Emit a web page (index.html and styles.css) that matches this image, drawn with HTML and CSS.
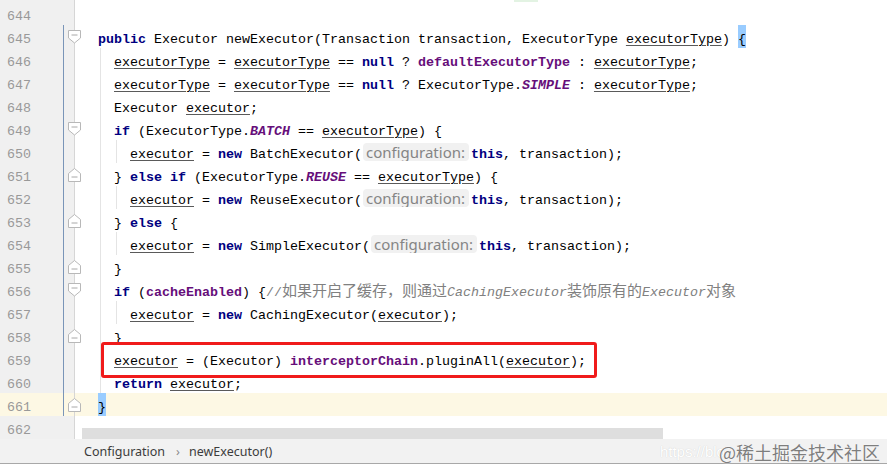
FILE: index.html
```html
<!DOCTYPE html>
<html>
<head>
<meta charset="utf-8">
<link rel="stylesheet" href="styles.css">
</head>
<body>
<div class="editor">
  <div class="topstrip"><span class="greenmark"></span></div>

  <div class="row"><div class="gutter"><span class="num">644</span><span class="sp"></span><span class="bl"></span><span class="sp2"></span><span class="fold"></span></div><div class="code"></div></div>

  <div class="row"><div class="gutter"><span class="num">645</span><span class="sp"></span><span class="bl on"></span><span class="sp2"></span><span class="fold"><svg class="fm" width="14" height="14" viewBox="0 0 14 14"><path d="M0.5 0.5H12.5V8L6.5 13L0.5 8Z"/><path class="minus" d="M3.5 5H9.5"/></svg></span></div><div class="code">  <b class="kw">public</b> Executor newExecutor(Transaction transaction, ExecutorType <u>executorType</u>) <span class="brace">{</span></div></div>

  <div class="row"><div class="gutter"><span class="num">646</span><span class="sp"></span><span class="bl on"></span><span class="sp2"></span><span class="fold"></span></div><div class="code g1">    <u>executorType</u> = <u>executorType</u> == <b class="kw">null</b> ? <b class="fld">defaultExecutorType</b> : <u>executorType</u>;</div></div>

  <div class="row"><div class="gutter"><span class="num">647</span><span class="sp"></span><span class="bl on"></span><span class="sp2"></span><span class="fold"></span></div><div class="code g1">    <u>executorType</u> = <u>executorType</u> == <b class="kw">null</b> ? ExecutorType.<b class="sf">SIMPLE</b> : <u>executorType</u>;</div></div>

  <div class="row"><div class="gutter"><span class="num">648</span><span class="sp"></span><span class="bl on"></span><span class="sp2"></span><span class="fold"></span></div><div class="code g1">    Executor <u>executor</u>;</div></div>

  <div class="row"><div class="gutter"><span class="num">649</span><span class="sp"></span><span class="bl on"></span><span class="sp2"></span><span class="fold"><svg class="fm" width="14" height="14" viewBox="0 0 14 14"><path d="M0.5 0.5H12.5V8L6.5 13L0.5 8Z"/><path class="minus" d="M3.5 5H9.5"/></svg></span></div><div class="code g1">    <b class="kw">if</b> (ExecutorType.<b class="sf">BATCH</b> == <u>executorType</u>) {</div></div>

  <div class="row"><div class="gutter"><span class="num">650</span><span class="sp"></span><span class="bl on"></span><span class="sp2"></span><span class="fold"></span></div><div class="code g2">      <u>executor</u> = <b class="kw">new</b> BatchExecutor(<span class="hint">configuration:</span><b class="kw">this</b>, transaction);</div></div>

  <div class="row"><div class="gutter"><span class="num">651</span><span class="sp"></span><span class="bl on"></span><span class="sp2"></span><span class="fold"><svg class="fm" width="14" height="14" viewBox="0 0 14 14"><path d="M6.5 0.5L12.5 5.5V13.5H0.5V5.5Z"/><path class="minus" d="M3.5 9H9.5"/></svg></span></div><div class="code g1">    } <b class="kw">else if</b> (ExecutorType.<b class="sf">REUSE</b> == <u>executorType</u>) {</div></div>

  <div class="row"><div class="gutter"><span class="num">652</span><span class="sp"></span><span class="bl on"></span><span class="sp2"></span><span class="fold"></span></div><div class="code g2">      <u>executor</u> = <b class="kw">new</b> ReuseExecutor(<span class="hint">configuration:</span><b class="kw">this</b>, transaction);</div></div>

  <div class="row"><div class="gutter"><span class="num">653</span><span class="sp"></span><span class="bl on"></span><span class="sp2"></span><span class="fold"><svg class="fm" width="14" height="14" viewBox="0 0 14 14"><path d="M6.5 0.5L12.5 5.5V13.5H0.5V5.5Z"/><path class="minus" d="M3.5 9H9.5"/></svg></span></div><div class="code g1">    } <b class="kw">else</b> {</div></div>

  <div class="row"><div class="gutter"><span class="num">654</span><span class="sp"></span><span class="bl on"></span><span class="sp2"></span><span class="fold"></span></div><div class="code g2">      <u>executor</u> = <b class="kw">new</b> SimpleExecutor(<span class="hint">configuration:</span><b class="kw">this</b>, transaction);</div></div>

  <div class="row"><div class="gutter"><span class="num">655</span><span class="sp"></span><span class="bl on"></span><span class="sp2"></span><span class="fold"><svg class="fm" width="14" height="14" viewBox="0 0 14 14"><path d="M6.5 0.5L12.5 5.5V13.5H0.5V5.5Z"/><path class="minus" d="M3.5 9H9.5"/></svg></span></div><div class="code g1">    }</div></div>

  <div class="row"><div class="gutter"><span class="num">656</span><span class="sp"></span><span class="bl on"></span><span class="sp2"></span><span class="fold"><svg class="fm" width="14" height="14" viewBox="0 0 14 14"><path d="M0.5 0.5H12.5V8L6.5 13L0.5 8Z"/><path class="minus" d="M3.5 5H9.5"/></svg></span></div><div class="code g1">    <b class="kw">if</b> (<b class="fld">cacheEnabled</b>) {<span class="cm">//<span class="cjk">如果开启了缓存，则通过</span><i>CachingExecutor</i><span class="cjk">装饰原有的</span><i>Executor</i><span class="cjk">对象</span></span></div></div>

  <div class="row"><div class="gutter"><span class="num">657</span><span class="sp"></span><span class="bl on"></span><span class="sp2"></span><span class="fold"></span></div><div class="code g2">      <u>executor</u> = <b class="kw">new</b> CachingExecutor(<u>executor</u>);</div></div>

  <div class="row"><div class="gutter"><span class="num">658</span><span class="sp"></span><span class="bl on"></span><span class="sp2"></span><span class="fold"><svg class="fm" width="14" height="14" viewBox="0 0 14 14"><path d="M6.5 0.5L12.5 5.5V13.5H0.5V5.5Z"/><path class="minus" d="M3.5 9H9.5"/></svg></span></div><div class="code g1">    }</div></div>

  <div class="row"><div class="gutter"><span class="num">659</span><span class="sp"></span><span class="bl on"></span><span class="sp2"></span><span class="fold"></span></div><div class="code g1">    <u>executor</u> = (Executor) <b class="fld">interceptorChain</b>.pluginAll(<u>executor</u>);</div></div>

  <div class="row"><div class="gutter"><span class="num">660</span><span class="sp"></span><span class="bl on"></span><span class="sp2"></span><span class="fold"></span></div><div class="code g1">    <b class="kw">return</b> <u>executor</u>;</div></div>

  <div class="row caret"><div class="gutter"><span class="num">661</span><span class="sp"></span><span class="bl on"></span><span class="sp2"></span><span class="fold"><svg class="fm" width="14" height="14" viewBox="0 0 14 14"><path d="M6.5 0.5L12.5 5.5V13.5H0.5V5.5Z"/><path class="minus" d="M3.5 9H9.5"/></svg></span></div><div class="code">  <span class="brace">}</span></div></div>

  <div class="row"><div class="gutter"><span class="num">662</span><span class="sp"></span><span class="bl"></span><span class="sp2"></span><span class="fold"></span></div><div class="code"></div></div>

  <div class="redbox"></div>
  <div class="hscroll"></div>
</div>
<div class="crumbs">
  <span class="crumb">Configuration</span><span class="arrow">›</span><span class="crumb">newExecutor()</span>
</div>
<div class="watermark"><span class="wm-url">https://blo</span><span class="wm-name">@稀土掘金技术社区</span></div>
</body>
</html>
```
FILE: styles.css
```css
html, body {
  margin: 0;
  padding: 0;
  background: #ffffff;
  width: 887px;
  height: 468px;
  overflow: hidden;
  position: relative;
}

.editor {
  position: relative;
  height: 439px;
  overflow: hidden;
  background: #ffffff;
}

.topstrip {
  height: 2px;
  display: flex;
  background: linear-gradient(to right, #f0f0f0 0, #f0f0f0 74px, #d6d6d6 74px, #d6d6d6 75px, #ffffff 75px);
}
.greenmark {
  margin-left: 514px;
  width: 24px;
  height: 2px;
  background: #e3f3e3;
}

.row {
  display: flex;
  height: 23px;
  overflow: hidden;
  font-family: "Liberation Mono", monospace;
  font-size: 13.333px;
  line-height: 17px;
  color: #000000;
}

.gutter {
  display: flex;
  width: 82px;
  flex: none;
  height: 23px;
  background: linear-gradient(to right, #f0f0f0 0, #f0f0f0 74px, #ffffff 74px);
}
.num {
  width: 31px;
  box-sizing: border-box;
  padding-top: 6px;
  text-align: right;
  color: #999999;
}
.sp { width: 32px; }
.bl { width: 1px; }
.bl.on { background: #7a95b8; }
.sp2 { width: 4px; }
.fold {
  width: 14px;
  display: flex;
  align-items: center;
  background: linear-gradient(to right, transparent 0, transparent 6px, #d6d6d6 6px, #d6d6d6 7px, transparent 7px);
}
.fm path {
  fill: #ffffff;
  stroke: #b8b8b8;
  stroke-width: 1;
}
.fm path.minus {
  fill: none;
  stroke: #a8a8a8;
}

.row.caret,
.row.caret .gutter {
  background: #fdf8e4;
}
.row.caret .fold {
  background: linear-gradient(to right, transparent 0, transparent 6px, #d6d6d6 6px, #d6d6d6 7px, transparent 7px);
}

.code {
  flex: 1;
  white-space: pre;
  height: 23px;
  box-sizing: border-box;
  padding-top: 6px;
}
.code.g1 {
  background: linear-gradient(to right, transparent 0, transparent 18px, #e4e4e4 18px, #e4e4e4 19px, transparent 19px);
}
.code.g2 {
  background:
    linear-gradient(to right, transparent 0, transparent 18px, #e4e4e4 18px, #e4e4e4 19px, transparent 19px),
    linear-gradient(to right, transparent 0, transparent 34px, #e4e4e4 34px, #e4e4e4 35px, transparent 35px);
}

.kw {
  color: #000080;
  font-weight: bold;
}
.fld {
  color: #660e7a;
  font-weight: bold;
}
.sf {
  color: #660e7a;
  font-weight: bold;
  font-style: italic;
}
u {
  text-decoration: underline;
  text-decoration-color: #5a5a5a;
  text-underline-offset: 2px;
}
.brace {
  display: inline-block;
  box-sizing: border-box;
  vertical-align: top;
  background: #99ccff;
  height: 23px;
  margin-top: -6px;
  padding-top: 6px;
}
.cm {
  color: #808080;
}
.cm i {
  font-style: italic;
}
.cjk {
  font-family: "Noto Sans CJK SC", sans-serif;
  font-size: 15px;
  font-weight: normal;
  line-height: 0;
}

.hint {
  display: inline-block;
  box-sizing: border-box;
  width: 106px;
  height: 18px;
  line-height: 18px;
  margin: -3px 2px 0 1px;
  padding-left: 3px;
  vertical-align: top;
  border-radius: 4px;
  background: #f1f1f1;
  color: #858585;
  font-family: "Noto Sans", sans-serif;
  font-size: 15px;
  white-space: nowrap;
  overflow: hidden;
}

.redbox {
  position: absolute;
  left: 101px;
  top: 342px;
  width: 496px;
  height: 36px;
  box-sizing: border-box;
  border: 3px solid #f01b1b;
  border-radius: 3px;
}

.hscroll {
  position: absolute;
  left: 82px;
  top: 428px;
  width: 581px;
  height: 11px;
  background: #dedede;
}

.crumbs {
  height: 24px;
  background: #f2f2f2;
  border-bottom: 1px solid #a8a8a8;
  display: flex;
  align-items: center;
  padding-left: 84px;
  font-family: "Noto Sans", sans-serif;
  font-size: 12.5px;
  color: #3c3c3c;
}
.arrow {
  margin: 0 9px 0 11px;
  color: #8a8a8a;
}

.watermark {
  position: absolute;
  right: 7px;
  top: 439px;
  height: 25px;
  display: flex;
  align-items: center;
}
.wm-url {
  font-family: "Liberation Sans", sans-serif;
  font-size: 15px;
  color: #ffffff;
  text-shadow: 0 0 1px #c8c8c8;
  margin-right: -6px;
}
.wm-name {
  font-family: "Noto Sans CJK SC", sans-serif;
  font-size: 18px;
  color: #7e7e7e;
  text-shadow: 0 0 1px #ffffff, 0 0 1px #ffffff;
}
```
